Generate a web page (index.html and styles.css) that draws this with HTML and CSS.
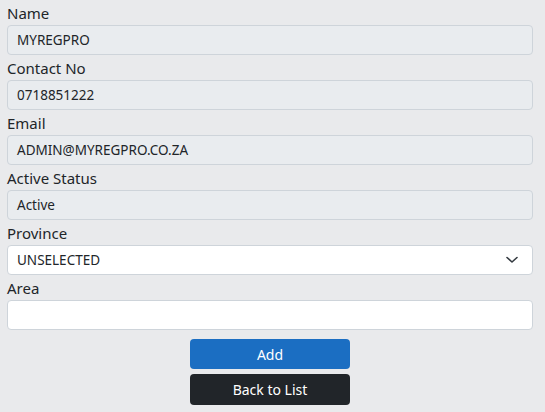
FILE: index.html
```html
<!DOCTYPE html>
<html>
<head>
<meta charset="utf-8">
<link rel="stylesheet" href="styles.css">
</head>
<body>
<form class="form">
  <div class="field">
    <label class="label">Name</label>
    <div class="input disabled">MYREGPRO</div>
  </div>
  <div class="field">
    <label class="label">Contact No</label>
    <div class="input disabled">0718851222</div>
  </div>
  <div class="field">
    <label class="label">Email</label>
    <div class="input disabled">ADMIN@MYREGPRO.CO.ZA</div>
  </div>
  <div class="field">
    <label class="label">Active Status</label>
    <div class="input disabled">Active</div>
  </div>
  <div class="field">
    <label class="label">Province</label>
    <div class="input select">
      <span>UNSELECTED</span>
      <svg class="chev" width="12" height="8" viewBox="0 0 12 8"><path d="M1 1.5 L6 6 L11 1.5" fill="none" stroke="#343a40" stroke-width="1.6" stroke-linecap="round" stroke-linejoin="round"/></svg>
    </div>
  </div>
  <div class="field">
    <label class="label">Area</label>
    <div class="input"></div>
  </div>
  <div class="actions">
    <button type="button" class="btn primary">Add</button>
    <button type="button" class="btn dark">Back to List</button>
  </div>
</form>
</body>
</html>
```
FILE: styles.css
```css
html, body {
  margin: 0;
  padding: 0;
  background: #e9eaec;
}
body {
  font-family: "Noto Sans", "Open Sans", sans-serif;
  color: #212529;
}
.form {
  width: 526px;
  padding-left: 7px;
  display: flex;
  flex-direction: column;
}
.field {
  display: flex;
  flex-direction: column;
}
.label {
  font-size: 15px;
  line-height: 26px;
  height: 25px;
  color: #212529;
}
.input {
  box-sizing: border-box;
  height: 30px;
  border: 1px solid #ced4da;
  border-radius: 4px;
  background: #fff;
  padding: 0 9px;
  font-size: 13.5px;
  line-height: 28px;
  display: flex;
  align-items: center;
  justify-content: space-between;
}
.input.disabled {
  background: #e9ecef;
}
.chev {
  margin-right: 5px;
}
.actions {
  display: flex;
  flex-direction: column;
  align-items: center;
  gap: 5px;
  margin-top: 9px;
}
.btn {
  width: 160px;
  height: 31px;
  border: none;
  border-radius: 4px;
  color: #fff;
  font-family: "Noto Sans", "Open Sans", sans-serif;
  font-size: 14px;
  padding: 0;
}
.btn.primary {
  background: #1b6ec2;
  height: 30px;
}
.btn.dark {
  background: #212529;
}
```
